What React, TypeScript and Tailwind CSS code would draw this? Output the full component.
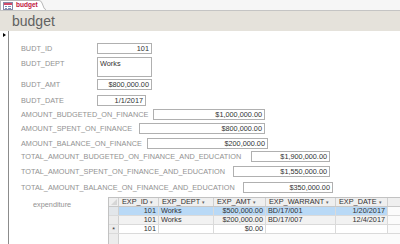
import React from 'react';

interface FieldRow {
  label: string;
  labelW: number;
  value: string;
  boxW: number;
  mt: number;
  tall?: boolean;
  left?: boolean;
}

const fields: FieldRow[] = [
  { label: 'BUDT_ID', labelW: 76, value: '101', boxW: 55, mt: 12 },
  { label: 'BUDT_DEPT', labelW: 76, value: 'Works', boxW: 55, mt: 3, tall: true, left: true },
  { label: 'BUDT_AMT', labelW: 76, value: '$800,000.00', boxW: 55, mt: 2 },
  { label: 'BUDT_DATE', labelW: 76, value: '1/1/2017', boxW: 49, mt: 5 },
  { label: 'AMOUNT_BUDGETED_ON_FINANCE', labelW: 132, value: '$1,000,000.00', boxW: 112, mt: 3 },
  { label: 'AMOUNT_SPENT_ON_FINANCE', labelW: 118, value: '$800,000.00', boxW: 126, mt: 3 },
  { label: 'AMOUNT_BALANCE_ON_FINANCE', labelW: 126, value: '$200,000.00', boxW: 121, mt: 4 },
  { label: 'TOTAL_AMOUNT_BUDGETED_ON_FINANCE_AND_EDUCATION', labelW: 230, value: '$1,900,000.00', boxW: 79, mt: 2 },
  { label: 'TOTAL_AMOUNT_SPENT_ON_FINANCE_AND_EDUCATION', labelW: 212, value: '$1,550,000.00', boxW: 97, mt: 4 },
  { label: 'TOTAL_AMOUNT_BALANCE_ON_FINANCE_AND_EDUCATION', labelW: 222, value: '$350,000.00', boxW: 90, mt: 5 },
];

const cols = [
  { name: 'EXP_ID', w: 40 },
  { name: 'EXP_DEPT', w: 55 },
  { name: 'EXP_AMT', w: 52 },
  { name: 'EXP_WARRANT', w: 70 },
  { name: 'EXP_DATE', w: 52 },
];

const rows = [
  { cells: ['101', 'Works', '$500,000.00', 'BD/17/001', '1/20/2017'], bg: 'bg-[#b9d9f6]', sel: true },
  { cells: ['101', 'Works', '$200,000.00', 'BD/17/007', '12/4/2017'], bg: 'bg-[#f2f2f2]' },
  { cells: ['101', '', '$0.00', '', ''], bg: 'bg-white', isNew: true },
];

const rightAligned = [true, false, true, false, true];

function FormIcon() {
  return (
    <svg width="10" height="8" viewBox="0 0 10 8">
      <rect x="0.5" y="0.5" width="9" height="7" fill="#fff" stroke="#8a8aa8" />
      <rect x="1" y="1" width="8" height="2" fill="#d24b6a" />
      <rect x="2" y="4" width="2" height="1" fill="#7a8fb8" />
      <rect x="5" y="4" width="3" height="1" fill="#7a8fb8" />
      <rect x="2" y="6" width="2" height="1" fill="#7a8fb8" />
      <rect x="5" y="6" width="3" height="1" fill="#7a8fb8" />
    </svg>
  );
}

function App() {
  return (
    <div className="w-[400px] h-[244px] overflow-hidden bg-white flex flex-col" style={{ fontFamily: '"Liberation Sans", Arial, sans-serif' }}>
      {/* document tab strip */}
      <div className="h-[10px] bg-[#f6f6f6] flex items-end shrink-0">
        <div className="h-[10px] bg-white border-t border-l border-[#b8b8b8] flex items-center gap-[3px] pl-[2px] pr-[1px]">
          <FormIcon />
          <span className="text-[6.5px] font-bold text-[#c0143c] leading-none whitespace-nowrap">budget</span>
        </div>
        <svg width="7" height="10" viewBox="0 0 7 10" className="shrink-0">
          <path d="M0 0.5 Q2 0.5 3 3 L5 8 Q5.6 9.5 7 9.5 L7 10 L0 10 Z" fill="#fff" />
          <path d="M0 0.5 Q2 0.5 3 3 L5 8 Q5.6 9.5 7 9.5" fill="none" stroke="#b8b8b8" strokeWidth="1" />
        </svg>
      </div>
      <div className="h-px bg-[#c4c4c4] shrink-0" />
      {/* form header */}
      <div className="h-[20px] bg-[#e5e2db] shrink-0 pl-[12px] flex items-center">
        <span className="text-[14px] leading-none text-[#616161] pb-[1px]">budget</span>
      </div>

      <div className="flex flex-1 min-h-0">
        {/* record selector */}
        <div className="w-[9px] border-r border-[#8c8c8c] shrink-0 pt-[2px] pl-[3px]">
          <div className="w-0 h-0 border-t-[2.5px] border-b-[2.5px] border-l-[3px] border-t-transparent border-b-transparent border-l-black" />
        </div>

        {/* detail */}
        <div className="flex-1 flex flex-col pl-[12px] text-[7.3px] leading-none">
          {fields.map(f => (
            <div key={f.label} className={`flex ${f.tall ? 'items-start' : 'items-center'}`} style={{ marginTop: f.mt }}>
              <span className={`text-[#929292] shrink-0 whitespace-nowrap ${f.tall ? 'pt-[3px]' : ''}`} style={{ width: f.labelW }}>
                {f.label}
              </span>
              <div
                className={`border border-[#b0b0b0] bg-white text-[#333] px-[2px] flex ${f.tall ? 'h-[20px] items-start pt-[2px]' : 'h-[11px] items-center'} ${f.left ? 'justify-start' : 'justify-end'}`}
                style={{ width: f.boxW }}
              >
                {f.value}
              </div>
            </div>
          ))}

          {/* subform */}
          <div className="flex mt-[4px] flex-1 min-h-0">
            <span className="w-[87px] pl-[12px] pt-[4px] text-[#929292] shrink-0">expenditure</span>
            <div className="flex-1 border-t border-l border-[#c2c2c2] bg-[#fbfbfb] flex flex-col">
              <div className="flex h-[9px] bg-[#efefef] border-b border-[#c8c8c8]">
                <div className="w-[10px] shrink-0 border-r border-[#d0d0d0] flex items-end justify-end p-[1px]">
                  <svg width="6" height="6" viewBox="0 0 6 6">
                    <path d="M6 0 L6 6 L0 6 Z" fill="#d6d6d6" />
                  </svg>
                </div>
                {cols.map(c => (
                  <div key={c.name} className="shrink-0 border-r border-[#d0d0d0] flex items-center pl-[3px] text-[#333] whitespace-nowrap" style={{ width: c.w }}>
                    {c.name}
                    <span className="ml-[2px] text-[5px] text-[#666]">▾</span>
                  </div>
                ))}
                <div className="flex-1" />
              </div>
              {rows.map((r, i) => (
                <div key={i} className="flex h-[9px] border-b border-[#dadada]">
                  <div className={`w-[10px] shrink-0 border-r border-[#d0d0d0] flex items-center justify-center text-[7px] text-[#333] ${r.sel ? 'bg-[#e2e6ea]' : 'bg-[#ececec]'}`}>
                    {r.isNew ? '*' : ''}
                  </div>
                  {r.cells.map((v, j) => (
                    <div
                      key={j}
                      className={`shrink-0 border-r border-[#dadada] flex items-center px-[2px] text-[#333] whitespace-nowrap ${r.bg} ${rightAligned[j] ? 'justify-end' : 'justify-start'}`}
                      style={{ width: cols[j].w }}
                    >
                      {v}
                    </div>
                  ))}
                  <div className="flex-1" />
                </div>
              ))}
              <div className="flex flex-1">
                <div className="w-[10px] shrink-0 bg-[#ececec] border-r border-[#d0d0d0]" />
                <div className="flex-1" />
              </div>
            </div>
          </div>
        </div>
      </div>
    </div>
  );
}

export default App;
